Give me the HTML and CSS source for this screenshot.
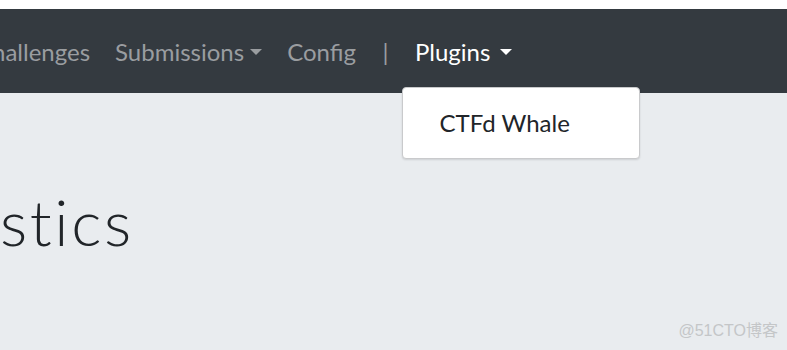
FILE: index.html
```html
<!DOCTYPE html>
<html lang="en">
<head>
<meta charset="utf-8">
<title>Admin Panel</title>
<link rel="stylesheet" href="styles.css">
</head>
<body>
<div class="topstrip"></div>
<nav class="navbar">
  <ul class="nav">
    <li class="nav-item"><a class="nav-link" href="#">hallenges</a></li>
    <li class="nav-item"><a class="nav-link" href="#">Submissions<span class="caret"></span></a></li>
    <li class="nav-item"><a class="nav-link" href="#">Config</a></li>
    <li class="nav-item"><span class="nav-link sep">|</span></li>
    <li class="nav-item dropdown">
      <a class="nav-link active" href="#">Plugins<span class="caret caret-wide"></span></a>
      <div class="dropdown-menu">
        <a class="dropdown-item" href="#">CTFd Whale</a>
      </div>
    </li>
  </ul>
</nav>
<main class="content">
  <h1 class="title">stics</h1>
</main>
<div class="watermark">@51CTO博客</div>
</body>
</html>
```
FILE: styles.css
```css
html, body {
  margin: 0;
  padding: 0;
}
body {
  width: 787px;
  height: 350px;
  overflow: hidden;
  background: #e9ecef;
  font-family: Lato, "Noto Sans", sans-serif;
  position: relative;
}
.topstrip {
  height: 9px;
  background: #ffffff;
}
.navbar {
  height: 84px;
  background: #343a40;
  display: flex;
  align-items: center;
  position: relative;
  z-index: 2;
}
.nav {
  list-style: none;
  margin: 2px 0 0 -20.5px;
  padding: 0;
  display: flex;
  align-items: center;
}
.nav-item {
  position: relative;
}
.nav-link {
  display: flex;
  align-items: center;
  padding: 8px 12.5px;
  font-size: 24px;
  line-height: 1.2;
  color: #9a9da0;
  text-decoration: none;
}
.nav-link.sep {
  padding: 8px 14px;
}
.nav-link.active {
  color: #ffffff;
}
.caret {
  display: inline-block;
  width: 0;
  height: 0;
  margin-left: 6px;
  border-top: 6.5px solid currentColor;
  border-left: 6.5px solid transparent;
  border-right: 6.5px solid transparent;
}
.caret-wide {
  margin-left: 10px;
}
.dropdown-menu {
  position: absolute;
  top: 57px;
  left: 0;
  width: 236px;
  height: 70px;
  background: #ffffff;
  border: 1px solid #c9cacc;
  border-radius: 4px;
  box-shadow: 0 1px 2px rgba(0,0,0,0.12);
  display: flex;
  align-items: center;
}
.dropdown-item {
  padding: 0 0 0 36px;
  font-size: 24px;
  color: #212529;
  text-decoration: none;
}
.content {
  padding-left: 0;
}
.title {
  margin: 0;
  padding-top: 91px;
  font-family: Lato, sans-serif;
  font-weight: 300;
  font-size: 64px;
  letter-spacing: 2.6px;
  line-height: 1.2;
  color: #212529;
}
.watermark {
  position: absolute;
  right: 9px;
  bottom: 9px;
  font-family: "Liberation Sans", "Noto Sans CJK SC", sans-serif;
  font-size: 16px;
  color: #c4c6c8;
}
```
